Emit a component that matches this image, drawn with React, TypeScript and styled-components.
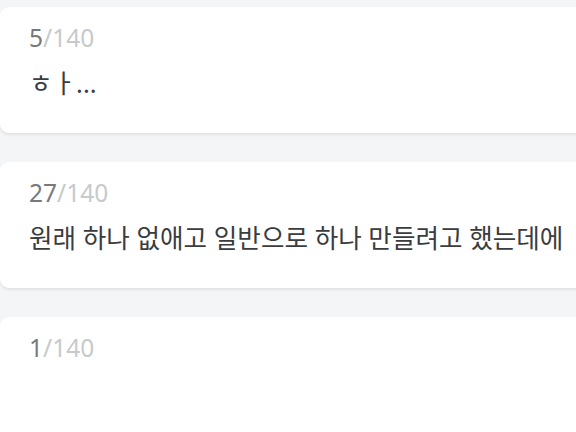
import React from 'react'
import styled, { createGlobalStyle } from 'styled-components'

const GlobalStyle = createGlobalStyle`
  html, body {
    margin: 0;
    padding: 0;
    background: #f3f5f6;
  }
  body {
    font-family: "Noto Sans", "Noto Sans CJK KR", sans-serif;
  }
`

const Page = styled.div`
  width: 576px;
  height: 432px;
  overflow: hidden;
`

const List = styled.div`
  display: flex;
  flex-direction: column;
  gap: 29px;
  padding-top: 7px;
  margin-right: -40px;
`

const Card = styled.div`
  background: #ffffff;
  border-radius: 9px;
  box-shadow: 0 2px 3px rgba(0, 0, 0, 0.08);
  height: 126px;
  box-sizing: border-box;
  padding: 14px 29px 0;
  display: flex;
  flex-direction: column;
  gap: 12px;
`

const Counter = styled.div`
  font-size: 24.5px;
  line-height: 34px;
  color: #c6cacc;
`

const Current = styled.span`
  color: #77797b;
`

const Body = styled.div`
  font-size: 25.6px;
  line-height: 34px;
  color: #3a3c3e;
  white-space: nowrap;
`

function NoteCard({ text, count }: { text: string; count: number }) {
  return (
    <Card>
      <Counter>
        <Current>{count}</Current>/140
      </Counter>
      <Body>{text}</Body>
    </Card>
  )
}

export default function App() {
  return (
    <Page>
      <GlobalStyle />
      <List>
        <NoteCard text="ㅎㅏ..." count={5} />
        <NoteCard text="원래 하나 없애고 일반으로 하나 만들려고 했는데에" count={27} />
        <NoteCard text="" count={1} />
      </List>
    </Page>
  )
}
